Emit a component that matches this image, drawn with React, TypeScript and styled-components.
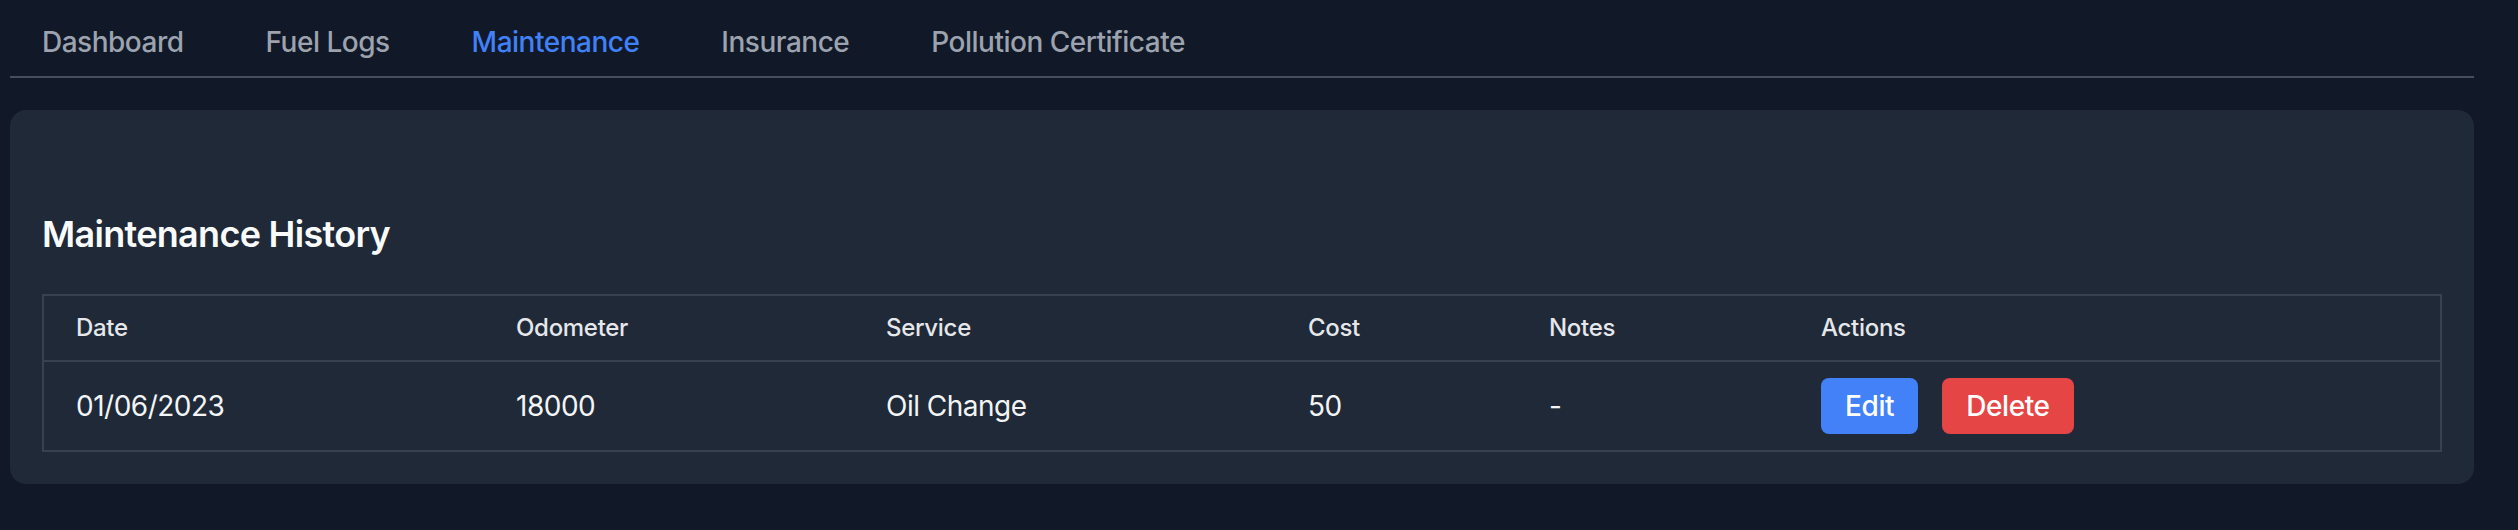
import React from "react";
import styled, { createGlobalStyle } from "styled-components";

const colors = {
    page: "#111827",
    card: "#1f2937",
    tabLine: "#464e5c",
    tableLine: "#384150",
    tabText: "#9ca3af",
    active: "#4181f7",
    heading: "#f9fafb",
    headCell: "#e5e7eb",
    cell: "#f3f4f6",
    edit: "#4381f8",
    remove: "#e64545",
};

const GlobalStyle = createGlobalStyle`
    body {
        margin: 0;
        background: ${colors.page};
        font-family: Inter, "Noto Sans", sans-serif;
        -webkit-font-smoothing: antialiased;
    }
`;

const Page = styled.div`
    width: 2464px;
    padding-left: 10px;
`;

const TabBar = styled.nav`
    display: flex;
    gap: 18px;
    border-bottom: 2px solid ${colors.tabLine};
`;

const Tab = styled.button<{ $active?: boolean }>`
    background: none;
    border: none;
    padding: 22px 32px 14px;
    font-family: inherit;
    font-size: 28px;
    line-height: 40px;
    font-weight: 500;
    letter-spacing: -0.5px;
    color: ${({ $active }) => ($active ? colors.active : colors.tabText)};
    cursor: pointer;
`;

const Card = styled.section`
    margin-top: 32px;
    background: ${colors.card};
    border-radius: 16px;
    padding: 32px;
`;

const Heading = styled.h2`
    margin: 64px 0 32px;
    font-size: 36px;
    line-height: 56px;
    font-weight: 600;
    letter-spacing: -0.7px;
    color: ${colors.heading};
`;

const Table = styled.table`
    width: 100%;
    border-collapse: collapse;
    border: 2px solid ${colors.tableLine};
    table-layout: fixed;
`;

const HeadCell = styled.th<{ $width?: number }>`
    box-sizing: border-box;
    width: ${({ $width }) => ($width ? `${$width}px` : "auto")};
    padding: 16px 32px;
    text-align: left;
    font-size: 24px;
    line-height: 32px;
    font-weight: 500;
    letter-spacing: -0.3px;
    color: ${colors.headCell};
    border-bottom: 2px solid ${colors.tableLine};
`;

const Cell = styled.td`
    padding: 16px 32px;
    font-size: 28px;
    line-height: 40px;
    letter-spacing: -0.5px;
    color: ${colors.cell};
    vertical-align: middle;
    border-bottom: 2px solid ${colors.tableLine};
`;

const Actions = styled.div`
    display: flex;
    gap: 24px;
`;

const ActionButton = styled.button<{ $danger?: boolean }>`
    border: none;
    border-radius: 8px;
    padding: 8px 24px;
    font-family: inherit;
    font-size: 28px;
    line-height: 40px;
    font-weight: 500;
    letter-spacing: -0.4px;
    color: #ffffff;
    background: ${({ $danger }) => ($danger ? colors.remove : colors.edit)};
    cursor: pointer;
`;

const tabs = ["Dashboard", "Fuel Logs", "Maintenance", "Insurance", "Pollution Certificate"];

const headings = [
    { key: "date", content: "Date", width: 441 },
    { key: "odometer", content: "Odometer", width: 370 },
    { key: "service", content: "Service", width: 422 },
    { key: "cost", content: "Cost", width: 241 },
    { key: "notes", content: "Notes", width: 272 },
    { key: "actions", content: "Actions" },
];

const records = [
    { id: 1, date: "01/06/2023", odometer: "18000", service: "Oil Change", cost: "50", notes: "-" },
];

const App = () => (
    <Page>
        <GlobalStyle />
        <TabBar>
            {tabs.map((tab) => (
                <Tab key={tab} $active={tab === "Maintenance"}>
                    {tab}
                </Tab>
            ))}
        </TabBar>
        <Card>
            <Heading>Maintenance History</Heading>
            <Table>
                <thead>
                    <tr>
                        {headings.map((head) => (
                            <HeadCell key={head.key} $width={head.width}>
                                {head.content}
                            </HeadCell>
                        ))}
                    </tr>
                </thead>
                <tbody>
                    {records.map((row) => (
                        <tr key={row.id}>
                            <Cell>{row.date}</Cell>
                            <Cell>{row.odometer}</Cell>
                            <Cell>{row.service}</Cell>
                            <Cell>{row.cost}</Cell>
                            <Cell>{row.notes}</Cell>
                            <Cell>
                                <Actions>
                                    <ActionButton>Edit</ActionButton>
                                    <ActionButton $danger>Delete</ActionButton>
                                </Actions>
                            </Cell>
                        </tr>
                    ))}
                </tbody>
            </Table>
        </Card>
    </Page>
);

export default App;
